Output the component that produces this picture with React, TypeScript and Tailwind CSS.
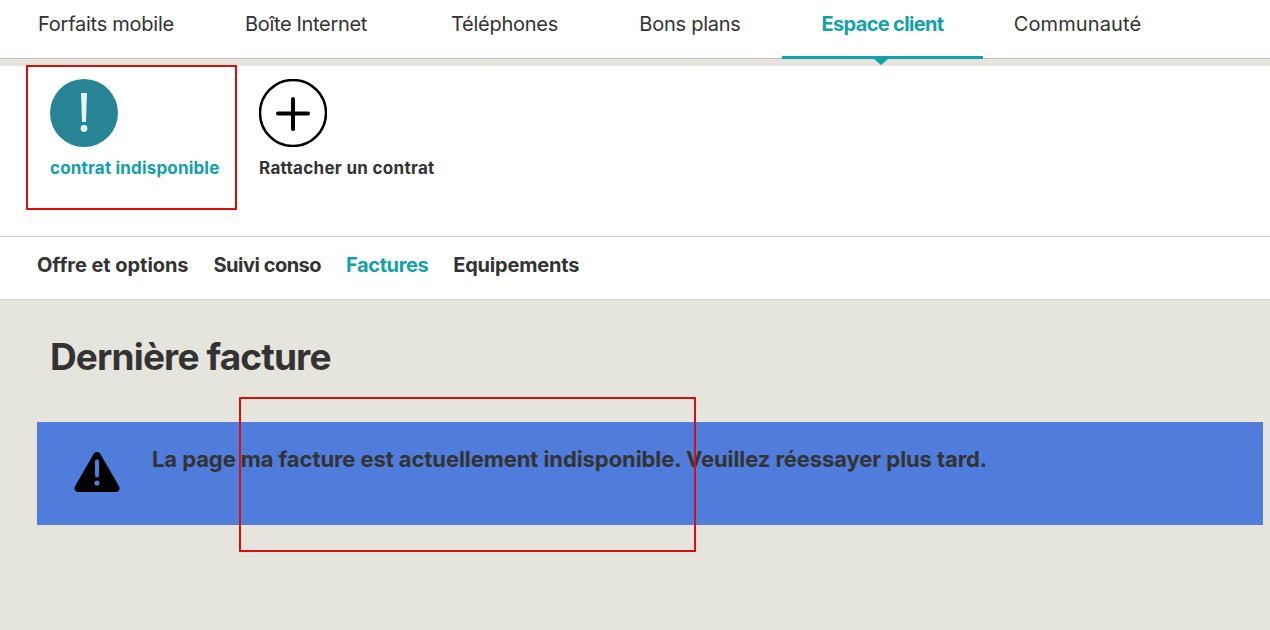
export default function App() {
  return (
    <div className="relative w-[1270px] h-[630px] overflow-hidden bg-[#e5e4dd] font-['Inter','Noto_Sans',sans-serif] text-[#333333]">
      {/* Top nav */}
      <nav className="flex h-[59px] bg-white border-b border-[#bdbcb6] pl-[11px] text-[20px] leading-[26px] tracking-[-0.25px]">
        <a className="w-[190px] pt-[11px] text-center">Forfaits mobile</a>
        <a className="w-[210px] pt-[11px] text-center tracking-[-0.33px]">Boîte Internet</a>
        <a className="w-[187px] pt-[11px] text-center">Téléphones</a>
        <a className="w-[184px] pt-[11px] text-center">Bons plans</a>
        <a className="relative w-[201px] h-[59px] pt-[11px] text-center font-bold tracking-[-0.65px] text-[#14a0a8] border-b-[3px] border-[#14a0a8]">
          Espace client
          <span className="absolute left-[92px] top-[59px] w-0 h-0 border-x-[7px] border-x-transparent border-t-[6px] border-t-[#14a0a8]" />
        </a>
        <a className="w-[189px] pt-[11px] text-center tracking-[0.1px]">Communauté</a>
      </nav>

      {/* Contract selector */}
      <section className="mt-[7px] flex h-[171px] bg-white border-b border-[#d0d0d0] pl-[50px] pt-[13px] text-[17px] leading-[24px] font-bold">
        <div className="w-[209px]">
          <div className="flex h-[68px] w-[68px] items-center justify-center rounded-full bg-[#268494]">
            <svg width="68" height="68" viewBox="0 0 68 68">
              <path d="M31 14h6l-1 29h-4z" fill="#e8f3f4" />
              <circle cx="34" cy="49.500" r="3.400" fill="#e8f3f4" />
            </svg>
          </div>
          <p className="mt-[9px] text-[#14a0a8] tracking-[0.18px]">contrat indisponible</p>
        </div>
        <div>
          <div className="h-[68px] w-[68px]">
            <svg width="68" height="68" viewBox="0 0 68 68" fill="none" stroke="#000">
              <circle cx="34" cy="34" r="33" strokeWidth="2.500" />
              <path d="M19 34.500h30M34 20v30" strokeWidth="4" strokeLinecap="round" />
            </svg>
          </div>
          <p className="mt-[9px] tracking-[0.3px]">Rattacher un contrat</p>
        </div>
      </section>

      {/* Sub nav */}
      <nav className="flex h-[63px] items-center gap-[25px] bg-white border-b border-[#d0d0d0] pl-[37px] pb-[7px] text-[20px] font-bold tracking-[-0.05px]">
        <a>Offre et options</a>
        <a className="tracking-[-0.5px]">Suivi conso</a>
        <a className="text-[#14a0a8] tracking-[-0.4px]">Factures</a>
        <a className="tracking-[-0.2px]">Equipements</a>
      </nav>

      {/* Content */}
      <main className="pl-[37px] pr-[7px]">
        <h1 className="ml-[13px] mt-[34px] text-[37px] leading-[46px] font-bold tracking-[-0.85px]">Dernière facture</h1>
        <div className="mt-[42px] flex h-[103px] bg-[#507cdb] pl-[37px] pt-[24px]">
          <svg width="46" height="42" viewBox="0 0 46 42" className="mt-[5px] shrink-0">
            <path d="M23 1c1.500 0 2.700.8 3.500 2.200l18.500 32c1.200 2.300.3 5.800-3 5.800H4c-3.300 0-4.200-3.500-3-5.800l18.500-32C20.300 1.800 21.500 1 23 1z" fill="#000" />
            <path d="M21 10.500c0-2.600 4-2.600 4 0v14c0 2.600-4 2.600-4 0z" fill="#507cdb" />
            <circle cx="23" cy="32" r="2.600" fill="#507cdb" />
          </svg>
          <p className="ml-[32px] text-[22px] leading-[26px] font-bold tracking-[-0.085px]">La page ma facture est actuellement indisponible. Veuillez réessayer plus tard.</p>
        </div>
      </main>

      {/* Annotation rectangles */}
      <div className="absolute left-[26px] top-[65px] w-[211px] h-[145px] border-2 border-[#d60f0f]" />
      <div className="absolute left-[239px] top-[397px] w-[457px] h-[155px] border-2 border-[#d60f0f]" />
    </div>
  );
}
